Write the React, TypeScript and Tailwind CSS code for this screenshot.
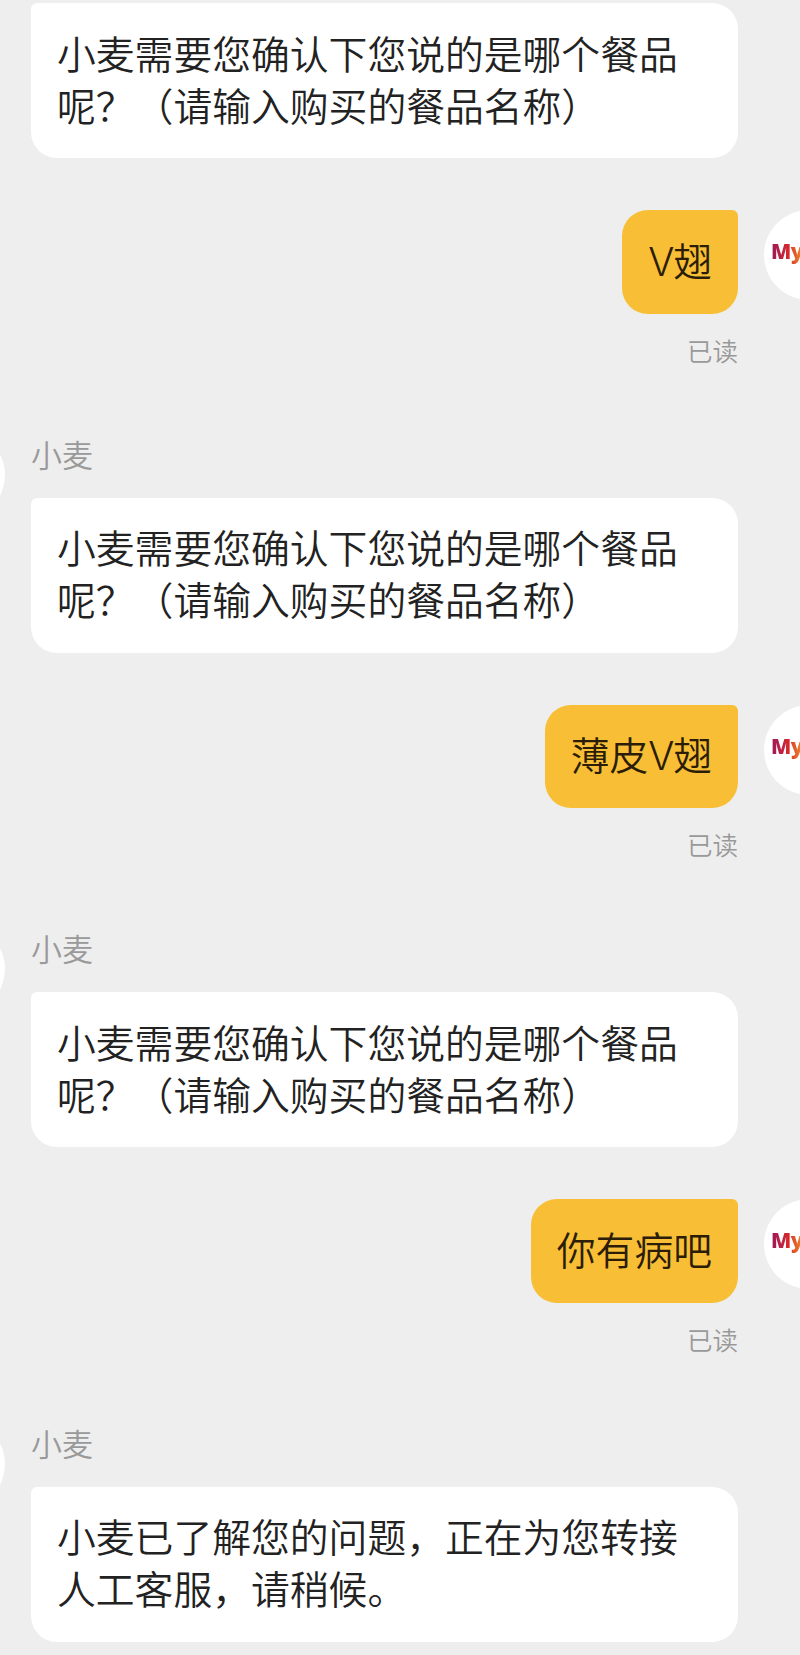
type Message = {
  id: number;
  from: "bot" | "user";
  text: string;
  sender?: string;
};

const messages: Message[] = [
  { id: 1, from: "bot", text: "小麦需要您确认下您说的是哪个餐品呢？（请输入购买的餐品名称）" },
  { id: 2, from: "user", text: "V翅" },
  { id: 3, from: "bot", sender: "小麦", text: "小麦需要您确认下您说的是哪个餐品呢？（请输入购买的餐品名称）" },
  { id: 4, from: "user", text: "薄皮V翅" },
  { id: 5, from: "bot", sender: "小麦", text: "小麦需要您确认下您说的是哪个餐品呢？（请输入购买的餐品名称）" },
  { id: 6, from: "user", text: "你有病吧" },
  { id: 7, from: "bot", sender: "小麦", text: "小麦已了解您的问题，正在为您转接人工客服，请稍候。" },
];

function BotMessage({ text, sender }: { text: string; sender?: string }) {
  return (
    <div className="flex h-[283px] items-start gap-[26px]">
      <div className="-ml-[85px] mt-[8px] size-[90px] shrink-0 rounded-full bg-white" />
      <div className="w-[707px] shrink-0">
        <div className="h-[76px] pt-[9px] text-[31px] font-[350] leading-[46px] text-[#999]">{sender}</div>
        <div className="h-[155px] rounded-[26px] rounded-tl-[6px] bg-white px-[26px] pt-[23.5px] text-[38.8px] font-[350] leading-[51.7px] text-[#222]">
          {text}
        </div>
      </div>
    </div>
  );
}

function UserMessage({ text }: { text: string }) {
  return (
    <div className="flex h-[211.5px] items-start justify-end gap-[26px]">
      <div className="flex flex-col items-end">
        <div className="h-[103.5px] rounded-[26px] rounded-tr-[6px] bg-[#f8bf36] px-[26px] pt-[23.5px] text-[38.8px] font-[350] leading-[51.7px] text-[#2b1d08]">
          {text.split("V").map((part, i) => (
            <span key={i}>
              {i > 0 && <span className="font-[Inter] font-[350] tracking-[-1.2px]">V</span>}
              {part}
            </span>
          ))}
        </div>
        <div className="mt-[17px] text-[25.5px] font-[350] leading-[38px] text-[#999]">已读</div>
      </div>
      <div className="-mr-[54px] size-[90px] shrink-0 rounded-full bg-white pl-[7px] pt-[27px]">
        <span className="block w-fit bg-linear-to-r from-[#9c1458] via-[#d4282c] via-55% to-[#f08a24] bg-clip-text font-['Open_Sans'] text-[21px] font-extrabold leading-[28px] tracking-[-0.5px] text-transparent">
          My
        </span>
      </div>
    </div>
  );
}

export default function App() {
  return (
    <div className="h-[1655px] w-[800px] overflow-hidden bg-[#eeeeee] font-['Noto_Sans_CJK_SC',sans-serif] [text-spacing-trim:space-all]">
      {/* the list is scrolled, so the first avatar sits above the fold */}
      <div className="-mt-[72.7px]">
        {messages.map((m) =>
          m.from === "bot" ? (
            <BotMessage key={m.id} text={m.text} sender={m.sender} />
          ) : (
            <UserMessage key={m.id} text={m.text} />
          )
        )}
      </div>
    </div>
  );
}
